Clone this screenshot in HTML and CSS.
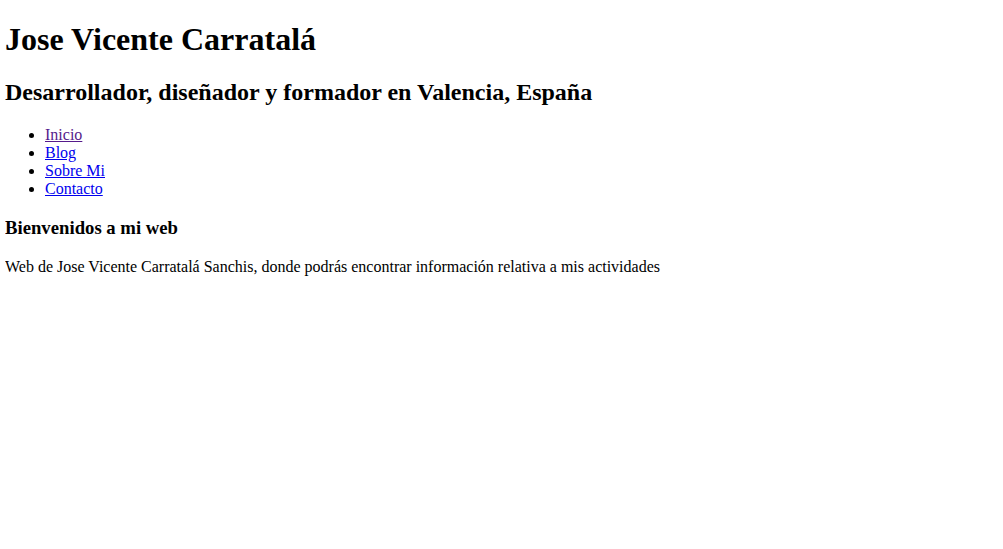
FILE: index.html
```html
<!DOCTYPE html>
<html lang="es">
<head>
<meta charset="utf-8">
<title>Jose Vicente Carratalá</title>
<link rel="stylesheet" href="styles.css">
</head>
<body class="page">
<header class="site-header">
<h1 class="site-title">Jose Vicente Carratalá</h1>
<h2 class="site-subtitle">Desarrollador, diseñador y formador en Valencia, España</h2>
<ul class="nav">
<li><a class="nav-link visited" href="#">Inicio</a></li>
<li><a class="nav-link" href="#">Blog</a></li>
<li><a class="nav-link" href="#">Sobre Mi</a></li>
<li><a class="nav-link" href="#">Contacto</a></li>
</ul>
</header>
<main class="content">
<h3 class="welcome">Bienvenidos a mi web</h3>
<p class="intro">Web de Jose Vicente Carratalá Sanchis, donde podrás encontrar información relativa a mis actividades</p>
</main>
</body>
</html>
```
FILE: styles.css
```css
html, body {
  background: #fff;
}
.page {
  margin: 0 5px 5px;
  font-family: "Liberation Serif", "Times New Roman", serif;
  font-size: 16px;
  color: #000;
}
.site-title {
  margin-top: 21px;
}
.nav-link {
  color: #0000ee;
}
.nav-link.visited {
  color: #551a8b;
}
```
